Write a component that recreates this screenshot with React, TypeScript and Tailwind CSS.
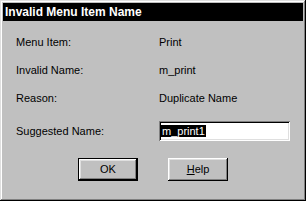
import React from 'react';

const rows = [
  { label: 'Menu Item:', value: 'Print' },
  { label: 'Invalid Name:', value: 'm_print' },
  { label: 'Reason:', value: 'Duplicate Name' },
];

function Button({ children, isDefault }: { children: React.ReactNode; isDefault?: boolean }) {
  return (
    <button
      className={
        'w-[60px] h-[23px] bg-[#c0c0c0] text-[11px] text-black flex items-center justify-center ' +
        (isDefault
          ? 'border border-black shadow-[inset_-1px_-1px_0_#000,inset_1px_1px_0_#fff,inset_-2px_-2px_0_#808080,inset_2px_2px_0_#dfdfdf]'
          : 'shadow-[inset_-1px_-1px_0_#000,inset_1px_1px_0_#fff,inset_-2px_-2px_0_#808080,inset_2px_2px_0_#dfdfdf]')
      }
    >
      {children}
    </button>
  );
}

export default function App() {
  return (
    <div
      className="w-[306px] h-[201px] bg-[#c0c0c0] p-[3px] flex flex-col text-black shadow-[inset_-1px_-1px_0_#000,inset_1px_1px_0_#dfdfdf,inset_-2px_-2px_0_#808080,inset_2px_2px_0_#fff]"
      style={{ fontFamily: '"Liberation Sans", Arial, sans-serif' }}
    >
      {/* Title bar */}
      <div className="h-[18px] bg-black text-white font-bold text-[12px] pl-[2px] flex items-center leading-none">
        Invalid Menu Item Name
      </div>

      {/* Body */}
      <div className="pl-[13px] pt-[15px] text-[11px] leading-[13px]">
        {rows.map((r) => (
          <div key={r.label} className="grid grid-cols-[143px_1fr] h-[28px]">
            <span>{r.label}</span>
            <span>{r.value}</span>
          </div>
        ))}
        <div className="grid grid-cols-[143px_1fr] items-center mt-[1px]">
          <span>Suggested Name:</span>
          <div className="w-[131px] h-[20px] bg-white p-[2px] flex items-center shadow-[inset_1px_1px_0_#808080,inset_-1px_-1px_0_#fff,inset_2px_2px_0_#000,inset_-2px_-2px_0_#dfdfdf]">
            <span className="bg-black text-white px-[1px] leading-[12px] ml-[0px]">m_print1</span>
          </div>
        </div>
      </div>

      {/* Buttons */}
      <div className="flex justify-center gap-[30px] mt-[17px]">
        <Button isDefault>OK</Button>
        <Button>
          <span>
            <span className="underline">H</span>elp
          </span>
        </Button>
      </div>
    </div>
  );
}
